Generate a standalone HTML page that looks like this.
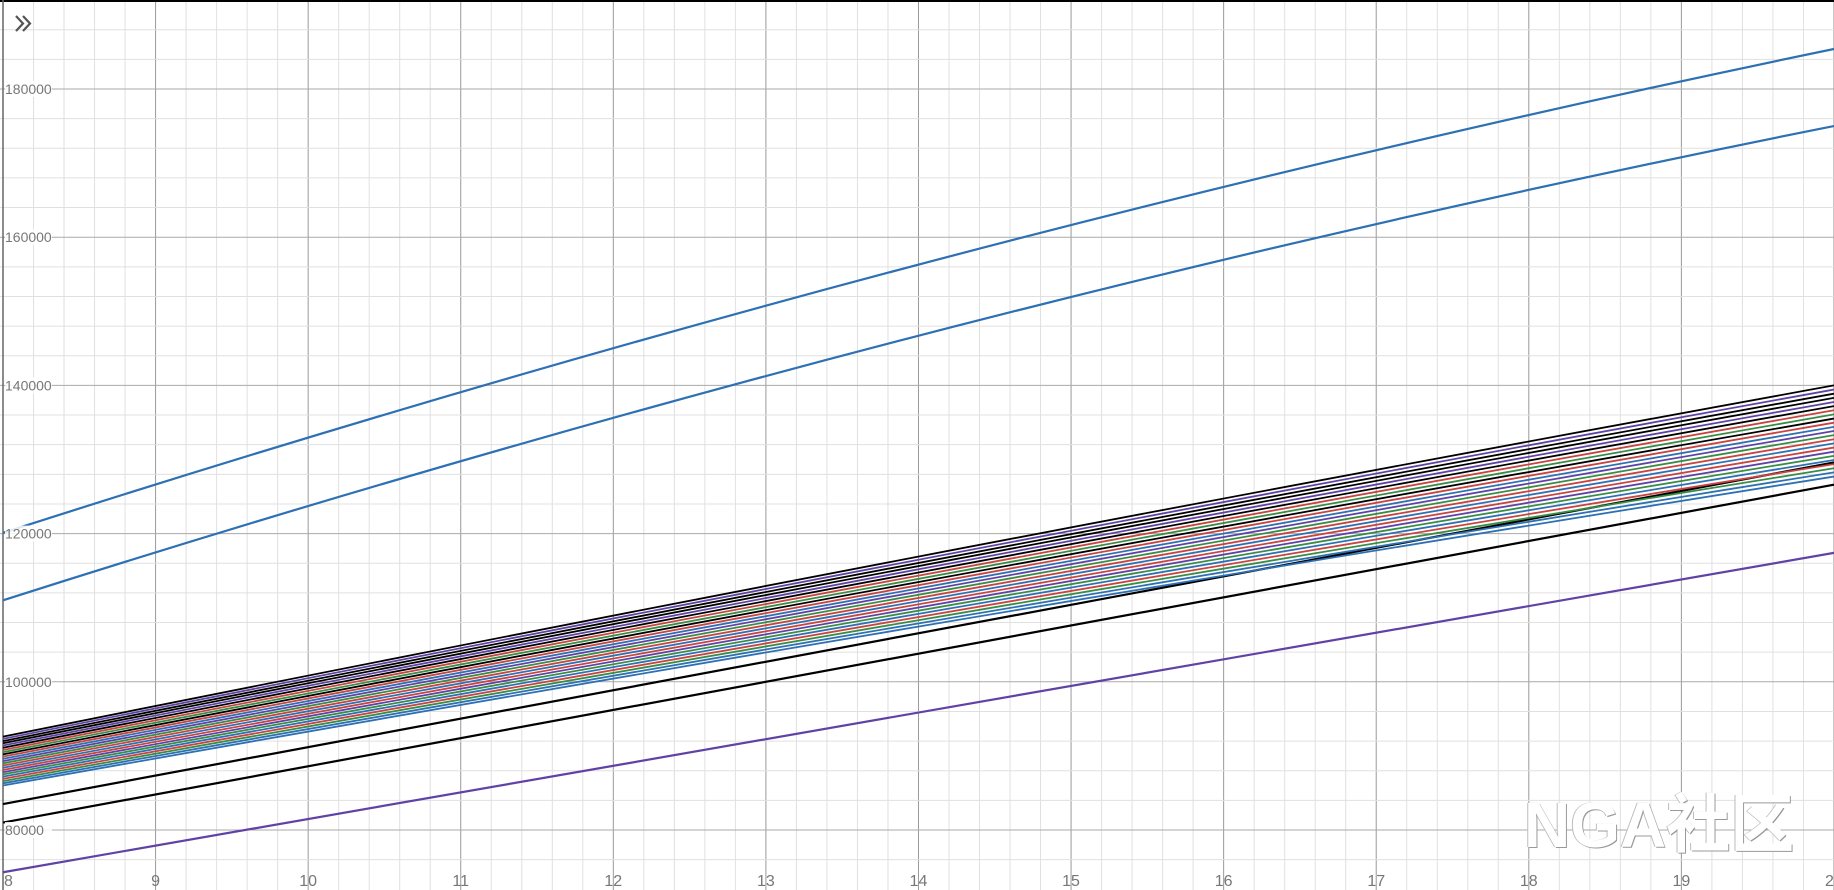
<!DOCTYPE html>
<html><head><meta charset="utf-8"><style>
html,body{margin:0;padding:0;background:#fff;overflow:hidden}
#c{position:absolute;left:0;top:0}
.wm{position:absolute;left:1524px;top:774px;font:bold 64px "Liberation Sans","Noto Sans CJK SC",sans-serif;color:#fff;text-shadow:1px 1px 0 #999,-1px 0 0 #bbb;letter-spacing:0px}
</style></head><body>
<svg id="c" width="1834" height="890" xmlns="http://www.w3.org/2000/svg"></svg>
<div class="wm">NGA社区</div>
<script>
var s=document.getElementById('c'),h='';
function X(x){return 3+(x-8)*152.58}
function Y(v){return 89+(180000-v)*0.00741}
for(var i=0;i<=60;i++){var x=X(8+i*0.2);h+='<line x1="'+x+'" y1="0" x2="'+x+'" y2="890" stroke="'+(i%5?'#e0e0e0':'#999')+'" stroke-width="1"/>';}
for(var v=76000;v<=192000;v+=4000){var y=Y(v);h+='<line x1="0" y1="'+y+'" x2="1834" y2="'+y+'" stroke="'+(v%20000?'#e0e0e0':'#aaa')+'" stroke-width="1"/>';}
h+='<line x1="0" y1="1" x2="1834" y2="1" stroke="#000" stroke-width="2"/>';
h+='<line x1="3" y1="0" x2="3" y2="890" stroke="#666" stroke-width="1.5"/>';
function L(a,m,b,c,w){var x1=X(8),x2=X(14),x3=X(20),y1=Y(a),y2=Y(m),y3=Y(b);var cy=2*y2-(y1+y3)/2;h+='<path d="M'+x1+' '+y1+' Q'+x2+' '+cy+' '+x3+' '+y3+'" fill="none" stroke="'+c+'" stroke-width="'+(w||2.2)+'"/>';}
var B='#2d70b3',R='#c74440',G='#388c46',P='#6042a6',K='#000';
L(120100,156300,185400,B);L(111000,146700,175000,B);
L(74300,95900,117400,P);L(81000,103800,126600,K);L(83500,106500,129600,K);
var cols=[K,P,K,K,P,K,R,G,K,R,B,P,G,R,B,R,P,G,B,R,G,B,B];
for(var i=0;i<cols.length;i++){var t=i/(cols.length-1);var a=92600-t*6600,b=140000-t*12300;L(a,(a+b)/2+600,b,cols[i],1.8);}
var f='font-family="Liberation Sans,sans-serif" font-size="14" fill="#777"';
for(var v=80000;v<=180000;v+=20000){var y=Y(v);h+='<rect x="5" y="'+(y-8)+'" width="47" height="16" fill="#fff" opacity="0.85"/><text x="5" y="'+(y+5)+'" '+f+'>'+v+'</text>';}
var f2='font-family="Liberation Sans,sans-serif" font-size="16" fill="#777"';
for(var k=8;k<=20;k++){var x=X(k);h+='<text x="'+(k==8?4:x)+'" y="886" '+f2+' text-anchor="'+(k==8?'start':'middle')+'">'+k+'</text>';}
h+='<path d="M16 16 L23 23.5 L16 31 M23 16 L30 23.5 L23 31" fill="none" stroke="#555" stroke-width="2.2"/>';
s.innerHTML=h;
</script>
</body></html>
